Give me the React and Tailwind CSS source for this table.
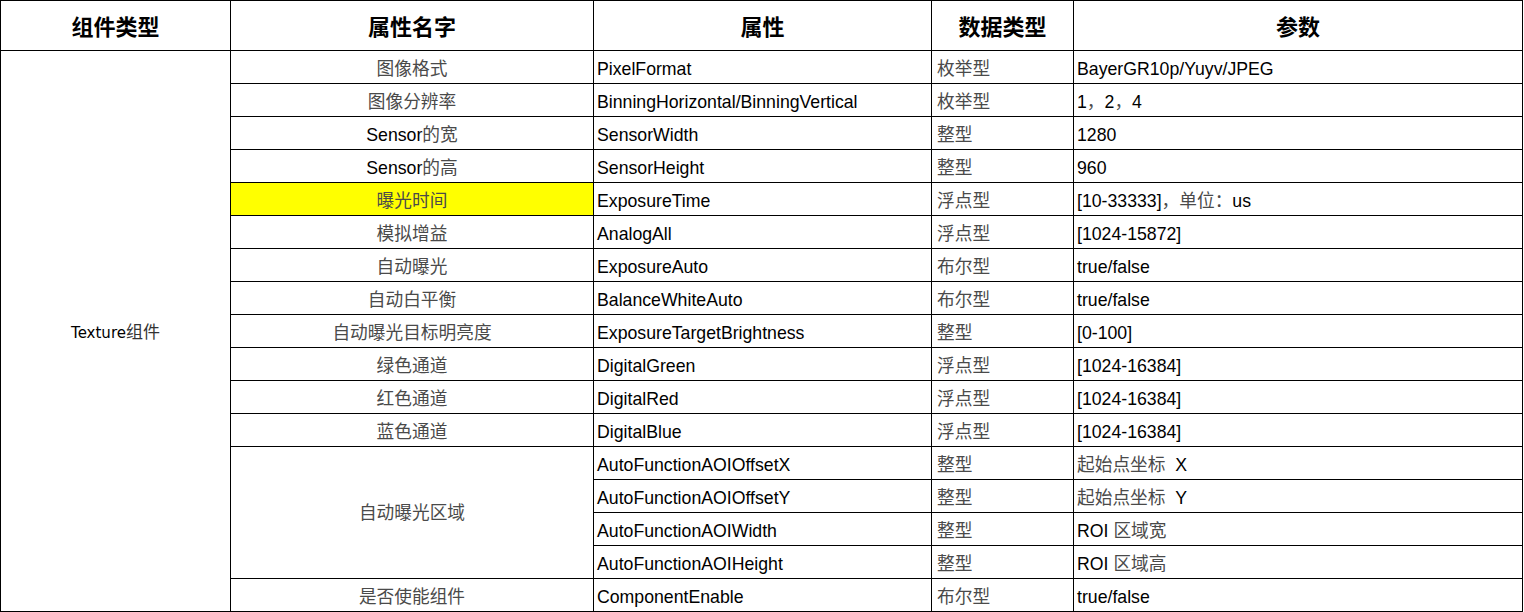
const FONT = '"Liberation Sans", "Noto Sans CJK SC", sans-serif'

const rows = [
  ['图像格式', 'PixelFormat', '枚举型', 'BayerGR10p/Yuyv/JPEG'],
  ['图像分辨率', 'BinningHorizontal/BinningVertical', '枚举型', '1，2，4'],
  ['Sensor的宽', 'SensorWidth', '整型', '1280'],
  ['Sensor的高', 'SensorHeight', '整型', '960'],
  ['曝光时间', 'ExposureTime', '浮点型', '[10-33333]，单位：us', true],
  ['模拟增益', 'AnalogAll', '浮点型', '[1024-15872]'],
  ['自动曝光', 'ExposureAuto', '布尔型', 'true/false'],
  ['自动白平衡', 'BalanceWhiteAuto', '布尔型', 'true/false'],
  ['自动曝光目标明亮度', 'ExposureTargetBrightness', '整型', '[0-100]'],
  ['绿色通道', 'DigitalGreen', '浮点型', '[1024-16384]'],
  ['红色通道', 'DigitalRed', '浮点型', '[1024-16384]'],
  ['蓝色通道', 'DigitalBlue', '浮点型', '[1024-16384]'],
]

const aoi = [
  ['AutoFunctionAOIOffsetX', '整型', '起始点坐标\u00a0\u00a0X'],
  ['AutoFunctionAOIOffsetY', '整型', '起始点坐标\u00a0\u00a0Y'],
  ['AutoFunctionAOIWidth', '整型', 'ROI 区域宽'],
  ['AutoFunctionAOIHeight', '整型', 'ROI 区域高'],
]

// split text so the CJK runs can be drawn lighter, like the thin SimSun in the sheet
function Txt({ children }) {
  const parts = String(children).match(/[\u3000-\u9fff\uff00-\uffef]+|[^\u3000-\u9fff\uff00-\uffef]+/g) || []
  return parts.map((p, i) =>
    /[\u3000-\u9fff\uff00-\uffef]/.test(p)
      ? <span key={i} className="text-[#4a4a4a]">{p}</span>
      : <span key={i}>{p}</span>
  )
}

function Head({ children }) {
  return (
    <div className="bg-white flex items-center justify-center pt-[3px] text-[22px] font-bold text-black">
      {children}
    </div>
  )
}

function Cell({ children, center, yellow, className = '' }) {
  return (
    <div
      className={`${yellow ? 'bg-[#ffff00]' : 'bg-white'} flex items-end pb-[3px] whitespace-nowrap overflow-hidden text-black ${center ? 'justify-center' : 'pl-[3px]'} ${className}`}
    >
      <div className="leading-[22px]"><Txt>{children}</Txt></div>
    </div>
  )
}

export default function App() {
  return (
    <div className="w-[1524px] h-[612px] bg-white" style={{ fontFamily: FONT }}>
      <div className="inline-grid grid-cols-[229px_362px_337px_141px_448px] grid-rows-[49px_repeat(17,32px)] gap-px p-px bg-black text-[17.7px]">
        <Head>组件类型</Head>
        <Head>属性名字</Head>
        <Head>属性</Head>
        <Head>数据类型</Head>
        <Head>参数</Head>

        <div className="row-span-[17] bg-white flex items-center justify-center pt-[4px] text-black">
          <span className="text-[15px]" style={{ fontFamily: '"DejaVu Sans", sans-serif' }}>Texture</span>
          <span className="text-[17px] text-[#333]">组件</span>
        </div>

        {rows.map(r => (
          <Row key={r[1]} r={r} />
        ))}

        <div className="row-span-4 bg-white flex items-center justify-center pt-[2px] text-[#4a4a4a]">
          自动曝光区域
        </div>
        {aoi.map(a => (
          <AoiRow key={a[0]} a={a} />
        ))}

        <Cell center>是否使能组件</Cell>
        <Cell>ComponentEnable</Cell>
        <Cell className="pl-[5px]">布尔型</Cell>
        <Cell>true/false</Cell>
      </div>
    </div>
  )
}

function Row({ r }) {
  const [name, prop, type, param, yellow] = r
  return (
    <>
      <Cell center yellow={yellow}>{name}</Cell>
      <Cell>{prop}</Cell>
      <Cell className="pl-[5px]">{type}</Cell>
      <Cell>{param}</Cell>
    </>
  )
}

function AoiRow({ a }) {
  return (
    <>
      <Cell>{a[0]}</Cell>
      <Cell className="pl-[5px]">{a[1]}</Cell>
      <Cell>{a[2]}</Cell>
    </>
  )
}
